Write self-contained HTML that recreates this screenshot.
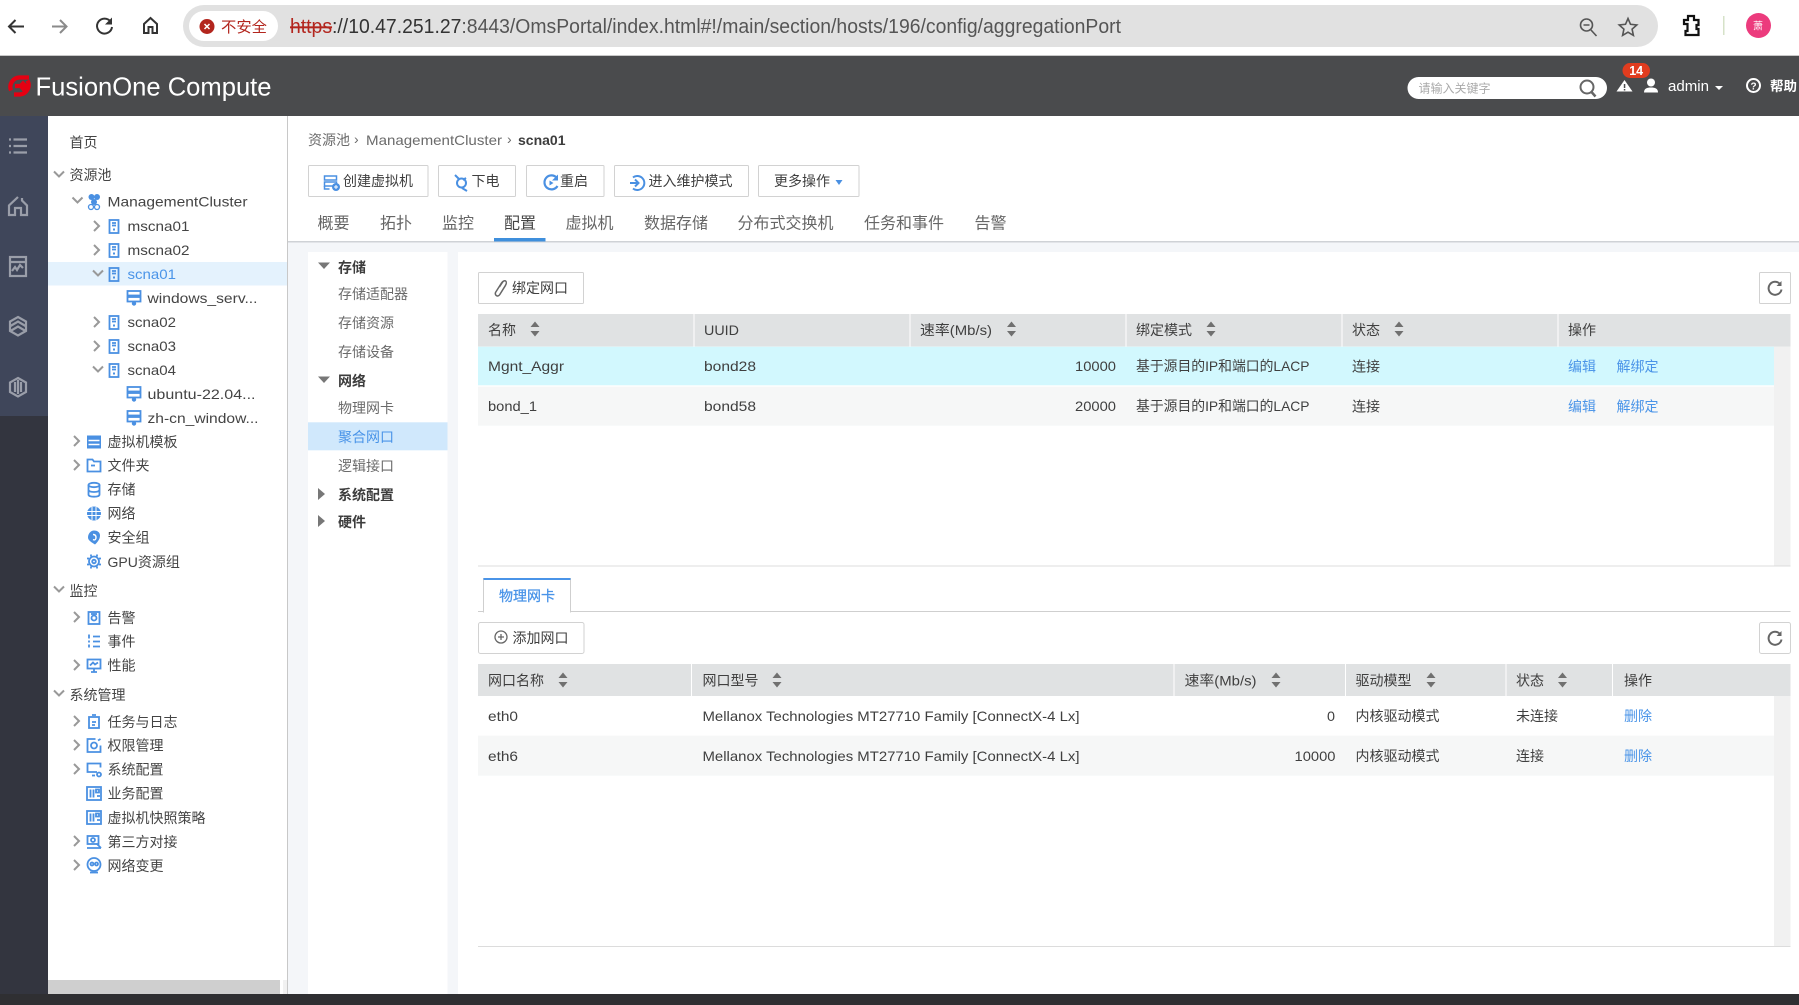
<!DOCTYPE html>
<html lang="zh-CN">
<head>
<meta charset="utf-8">
<title>FusionOne Compute</title>
<style>
html,body{margin:0;padding:0;width:1799px;height:1005px;overflow:hidden;background:#fff}
svg{display:block;font-family:"Liberation Sans","Noto Sans CJK SC",sans-serif}
text{white-space:pre}
.t{font-size:14px;fill:#444}
.m{font-size:14px;fill:#3f3f3f}
.g{font-size:14px;fill:#6b6b6b}
.b{font-size:14px;fill:#3d3d3d;font-weight:700}
.l{font-size:14px;fill:#4a94e8}
.tab{font-size:16px;fill:#666}
.ic{fill:none;stroke:#4a90e2;stroke-width:1.8}
.rail{fill:none;stroke:#9a9ea9;stroke-width:2.2}
.nav{fill:none;stroke:#333;stroke-width:2}
.btn{fill:#fff;stroke:#d2d2d2;stroke-width:1}
</style>
</head>
<body>
<svg xmlns="http://www.w3.org/2000/svg" width="1799" height="1005" viewBox="0 0 1799 1005">
<defs>
<path id="sort" d="M-4.500 -2L0 -7.500L4.500 -2ZM-4.500 2L0 7.500L4.500 2Z" fill="#707070"/>
<path id="cr" d="M-3 -5L2 0L-3 5" fill="none" stroke="#999" stroke-width="2"/>
<path id="cd" d="M-5 -2.500L0 2.500L5 -2.500" fill="none" stroke="#999" stroke-width="2"/>
<g id="host" class="ic"><rect x="-4.500" y="-6.500" width="9" height="13"/><path d="M-2 -3.500h4M-2 -1h4"/><path d="M-1 3h2" stroke-width="2"/></g>
<g id="vm" class="ic"><rect x="-6.500" y="-6.500" width="13" height="4.500"/><rect x="-6.500" y="-.5" width="13" height="4.500"/><path d="M0 4v2.500"/><circle cx="0" cy="6" r="1.300"/></g>
<g id="tmp"><rect x="-7" y="-6.500" width="14" height="13" fill="#4a90e2"/><path d="M-5.500 -1.500h11M-5.500 2.500h11" stroke="#fff" stroke-width="1.400"/></g>
<g id="folder" class="ic"><path d="M-6.500 -6h5l1.500 2h6.500v10h-13z"/><path d="M-3 0h4"/></g>
<g id="db" class="ic" stroke-width="2"><ellipse cx="0" cy="-4.500" rx="5.500" ry="2.200"/><path d="M-5.500 -4.500v9.500c0 1.500 2.500 2.200 5.500 2.200s5.500 -.7 5.500 -2.200v-9.500M-5.500 .3c0 1.500 2.500 2.200 5.500 2.200s5.500 -.7 5.500 -2.200"/></g>
<g id="net"><circle r="7" fill="#4a90e2"/><path d="M-7 -2h14M-7 2h14M-2 -6.500v13M2 -6.500v13" stroke="#fff" stroke-width="1"/></g>
<g id="sec"><path d="M0 -7c3 0 6 1.500 6 5 0 4 -3 7 -5 9 -3 -2 -7 -4 -7 -7 0 -4 3 -7 6 -7z" fill="#4a90e2"/><path d="M-1 -3c2 0 3 1 3 3s-1 3 -3 2" fill="none" stroke="#fff" stroke-width="1.400"/></g>
<g id="gpu" class="ic" stroke-width="1.800"><circle r="5"/><circle r="1.800"/><path d="M-7 -3h2M-7 3h2M5 -3h2M5 3h2M-3 -7v2M3 -7v2M-3 5v2M3 5v2"/></g>
<g id="alarm" class="ic"><rect x="-5.500" y="-6" width="11" height="12"/><circle r="2.500"/><path d="M-3 -4h6"/></g>
<g id="evt" class="ic"><path d="M-1 -5h7M-1 0h7M-1 5h7M-5 -7v4M-5 -1v2M-5 3v3"/></g>
<g id="perf" class="ic"><rect x="-6.500" y="-6" width="13" height="9"/><path d="M-3 6.500h6M0 3v3M-4 0l3 -3 2 2 3 -2"/></g>
<g id="task" class="ic" stroke-width="1.800"><rect x="-5" y="-5" width="10" height="11"/><path d="M-2 -7h4M-2 0h4M-2 3h3"/></g>
<g id="perm" class="ic" stroke-width="1.800"><path d="M6.500 0v6.500h-13v-13h8"/><circle cx="0" cy="0" r="3"/><path d="M4 -5l2.500 -1.500"/></g>
<g id="sys" class="ic" stroke-width="1.800"><path d="M3 2.500h-9.500v-8.500h13v4"/><path d="M-2 6h3"/><circle cx="5" cy="5" r="2"/></g>
<g id="biz" class="ic"><rect x="-7" y="-6.500" width="14" height="13"/><path d="M-3.500 -4v8M-.5 -4v8M2 -4h3v3h-3zM3 2.500h3"/></g>
<g id="third" class="ic"><rect x="-6.500" y="-6" width="11" height="8"/><circle cx="-1" cy="-2" r="2"/><path d="M-7 6h14M3 2l4 4"/></g>
<g id="chg" class="ic"><circle cx="0" cy="-1.500" r="6.500"/><circle cx="-2" cy="-2" r="1.500"/><circle cx="2.500" cy="-2" r="1.500"/><path d="M-4 6.500h8"/></g>
<g id="rf"><path d="M5 -4.500A6.500 6.500 0 1 0 6.500 1" fill="none" stroke="#666" stroke-width="2"/><path d="M6.500 -7.500v5h-5z" fill="#666"/></g>
</defs>

<!-- browser chrome -->
<rect width="1799" height="55" fill="#fff"/>
<rect x="0" y="55" width="1799" height="1" fill="#c8c8c8"/>
<rect x="183" y="5" width="1475" height="42" rx="21" fill="#e1e1e1"/>
<rect x="189" y="11" width="89" height="30" rx="15" fill="#fff"/>
<path class="nav" d="M24 26.500H9M15.500 20L9 26.500L15.500 33"/>
<path d="M67 26.500H52M60 20L66.500 26.500L60 33" fill="none" stroke="#8a8a8a" stroke-width="2"/>
<path class="nav" d="M110.500 21.500A7.500 7.500 0 1 0 112 27"/><path d="M112 17.500v7h-7z" fill="#333"/>
<path d="M144 33v-9l6.500 -6 6.500 6v9h-4.500v-6h-4v6z" fill="none" stroke="#333" stroke-width="2"/>
<circle cx="207" cy="26.500" r="7.500" fill="#b3261e"/><path d="M204.500 24l5 5M209.500 24l-5 5" stroke="#fff" stroke-width="1.500"/>
<text x="221" y="32" font-size="15" fill="#b3261e" textLength="46" lengthAdjust="spacingAndGlyphs">不安全</text>
<text x="290" y="33" font-size="20" fill="#555" textLength="831" lengthAdjust="spacingAndGlyphs"><tspan fill="#b3261e" text-decoration="line-through">https</tspan><tspan fill="#333">://10.47.251.27</tspan>:8443/OmsPortal/index.html#!/main/section/hosts/196/config/aggregationPort</text>
<circle cx="1586.500" cy="25" r="6" fill="none" stroke="#555" stroke-width="1.600"/><path d="M1591 30l5.500 6M1583.500 25h6" stroke="#555" stroke-width="1.600" fill="none"/>
<path d="M1628 18.500l2.500 5.800 6.300 .7 -4.700 4.200 1.300 6.200 -5.400 -3.200 -5.400 3.200 1.300 -6.200 -4.700 -4.200 6.300 -.7z" fill="none" stroke="#555" stroke-width="1.600"/>
<path d="M1684 20h4v-4h6v4h4.500v5h-2v4h2v6h-13v-4h2v-7h-3.500z" fill="none" stroke="#111" stroke-width="2.200"/>
<rect x="1723" y="16" width="1.500" height="19" fill="#d6e2c8"/>
<circle cx="1758.500" cy="25.500" r="12.500" fill="#ec3b7d"/>
<text x="1753" y="29.500" font-size="10" fill="#fff">萧</text>

<!-- app header -->
<rect y="56" width="1799" height="60" fill="#4a4b4d"/>
<path d="M11 90.500A9.500 9.500 0 0 1 19 77.500H29M27.500 80.500A9.500 9.500 0 0 1 20 94.500H14M15 86H25M21.500 82L25.500 86L21.500 90" fill="none" stroke="#e60012" stroke-width="4.200"/>
<text x="35.500" y="95.500" font-size="26" fill="#fff" textLength="236" lengthAdjust="spacingAndGlyphs">FusionOne Compute</text>
<rect x="1407.500" y="77" width="199.500" height="22" rx="11" fill="#fff"/>
<text x="1418.500" y="92.500" font-size="12" fill="#aaa">请输入关键字</text>
<circle cx="1587" cy="87" r="6.500" fill="none" stroke="#666" stroke-width="2"/><path d="M1591.500 92l4 4.500" stroke="#666" stroke-width="2.500"/>
<path d="M1624.500 80L1632.500 91.500H1616.500Z" fill="#fff"/><rect x="1623.800" y="84" width="1.500" height="4" fill="#4a4b4d"/><rect x="1623.800" y="89" width="1.500" height="1.500" fill="#4a4b4d"/>
<rect x="1622.500" y="63" width="27.500" height="15" rx="7.500" fill="#e03c1f"/>
<text x="1636.200" y="75" font-size="12.500" font-weight="700" fill="#fff" text-anchor="middle">14</text>
<circle cx="1651" cy="82.500" r="4" fill="#fff"/><path d="M1644 92.500c0 -4 3 -5 7 -5s7 1 7 5z" fill="#fff"/>
<text x="1668" y="91" font-size="14.500" fill="#fff" textLength="41" lengthAdjust="spacingAndGlyphs">admin</text>
<path d="M1715 86h8l-4 4z" fill="#fff"/>
<circle cx="1753.500" cy="85.500" r="6.500" fill="none" stroke="#fff" stroke-width="2"/><text x="1753.500" y="89.500" font-size="10" font-weight="700" fill="#fff" text-anchor="middle">?</text>
<text x="1770" y="91" font-size="13.500" font-weight="700" fill="#fff">帮助</text>

<!-- left rail -->
<rect y="116" width="48" height="889" fill="#33353f"/>
<rect y="116" width="48" height="300" fill="#3f465a"/>
<path class="rail" d="M13.500 139.500H27M13.500 146H27M13.500 152.500H27M9 139.500H11M9 146H11M9 152.500H11"/>
<path class="rail" d="M18 197L9 205.500V215H15V208H21V215H27V205.500L22 200.500V198"/>
<rect class="rail" x="10" y="257" width="16" height="19"/><path class="rail" d="M10 262H26M12 271l3 -4 2 3 3 -5 3 3" stroke-width="1.500"/>
<path class="rail" d="M18 317L26 321.500V331L18 335.500L10 331V321.500ZM10.500 326l7.500 -4.500 7.500 4.500M10.500 331l7.500 -4.500 7.500 4.500" stroke-width="2"/>
<path class="rail" d="M18 378L26 382.500V392L18 396.500L10 392V382.500ZM15 382v10M18 380v14M21 382v10" stroke-width="2"/>

<!-- tree panel -->
<rect x="48" y="116" width="239" height="878" fill="#fff"/>
<rect x="287" y="116" width="1" height="878" fill="#c8c8c8"/>
<rect x="48" y="262" width="239" height="23.500" fill="#e4f2fd"/>
<rect x="48" y="980" width="232" height="14" fill="#cfcfcf"/>
<rect x="283" y="980" width="4" height="14" fill="#f1f1f1"/>

<text class="t" x="69.500" y="147.500">首页</text>
<use href="#cd" x="59" y="174"/><text class="t" x="69.500" y="180">资源池</text>
<use href="#cd" x="77.500" y="200"/>
<g fill="#4a90e2"><circle cx="91.500" cy="197" r="3"/><circle cx="97" cy="197" r="3"/><circle cx="94" cy="202" r="3"/></g><circle cx="91" cy="207" r="2.500" fill="none" stroke="#4a90e2" stroke-width="1.300"/><circle cx="97" cy="207" r="2.500" fill="none" stroke="#4a90e2" stroke-width="1.300"/>
<text class="t" x="107.500" y="206.500" textLength="140" lengthAdjust="spacingAndGlyphs">ManagementCluster</text>
<use href="#cr" x="97" y="226"/><use href="#host" x="114" y="226.500"/><text class="t" x="127.500" y="231" textLength="62" lengthAdjust="spacingAndGlyphs">mscna01</text>
<use href="#cr" x="97" y="250"/><use href="#host" x="114" y="250.500"/><text class="t" x="127.500" y="255" textLength="62" lengthAdjust="spacingAndGlyphs">mscna02</text>
<use href="#cd" x="98" y="273"/><use href="#host" x="114" y="274.500"/><text class="l" x="127.500" y="279" textLength="48.500" lengthAdjust="spacingAndGlyphs">scna01</text>
<use href="#vm" x="134" y="297.500"/><text class="t" x="147.500" y="303" textLength="110" lengthAdjust="spacingAndGlyphs">windows_serv...</text>
<use href="#cr" x="97" y="322"/><use href="#host" x="114" y="322.500"/><text class="t" x="127.500" y="327" textLength="48.500" lengthAdjust="spacingAndGlyphs">scna02</text>
<use href="#cr" x="97" y="346"/><use href="#host" x="114" y="346.500"/><text class="t" x="127.500" y="351" textLength="48.500" lengthAdjust="spacingAndGlyphs">scna03</text>
<use href="#cd" x="98" y="369"/><use href="#host" x="114" y="370.500"/><text class="t" x="127.500" y="375" textLength="48.500" lengthAdjust="spacingAndGlyphs">scna04</text>
<use href="#vm" x="134" y="393.500"/><text class="t" x="147.500" y="399" textLength="108" lengthAdjust="spacingAndGlyphs">ubuntu-22.04...</text>
<use href="#vm" x="134" y="417.500"/><text class="t" x="147.500" y="423" textLength="111" lengthAdjust="spacingAndGlyphs">zh-cn_window...</text>
<use href="#cr" x="77" y="441"/><use href="#tmp" x="94" y="442"/><text class="t" x="107.500" y="447">虚拟机模板</text>
<use href="#cr" x="77" y="465"/><use href="#folder" x="94" y="465.500"/><text class="t" x="107.500" y="470.500">文件夹</text>
<use href="#db" x="94" y="489.500"/><text class="t" x="107.500" y="494.500">存储</text>
<use href="#net" x="94" y="513.500"/><text class="t" x="107.500" y="518.500">网络</text>
<use href="#sec" x="94" y="537.500"/><text class="t" x="107.500" y="542.500">安全组</text>
<use href="#gpu" x="94" y="561.500"/><text class="t" x="107.500" y="567" >GPU资源组</text>
<use href="#cd" x="59" y="589"/><text class="t" x="69.500" y="596">监控</text>
<use href="#cr" x="77" y="617"/><use href="#alarm" x="94" y="618"/><text class="t" x="107.500" y="623">告警</text>
<use href="#evt" x="94" y="641.500"/><text class="t" x="107.500" y="646.500">事件</text>
<use href="#cr" x="77" y="665"/><use href="#perf" x="94" y="665.500"/><text class="t" x="107.500" y="670.500">性能</text>
<use href="#cd" x="59" y="693"/><text class="t" x="69.500" y="700">系统管理</text>
<use href="#cr" x="77" y="721"/><use href="#task" x="94" y="722"/><text class="t" x="107.500" y="727">任务与日志</text>
<use href="#cr" x="77" y="745"/><use href="#perm" x="94" y="745.500"/><text class="t" x="107.500" y="750.500">权限管理</text>
<use href="#cr" x="77" y="769"/><use href="#sys" x="94" y="769.500"/><text class="t" x="107.500" y="774.500">系统配置</text>
<use href="#biz" x="94" y="793.500"/><text class="t" x="107.500" y="798.500">业务配置</text>
<use href="#biz" x="94" y="817.500"/><text class="t" x="107.500" y="823">虚拟机快照策略</text>
<use href="#cr" x="77" y="841"/><use href="#third" x="94" y="842"/><text class="t" x="107.500" y="847">第三方对接</text>
<use href="#cr" x="77" y="865"/><use href="#chg" x="94" y="866"/><text class="t" x="107.500" y="871">网络变更</text>

<!-- main top -->
<text class="g" x="308" y="145">资源池</text>
<text class="g" x="354" y="144">›</text>
<text class="g" x="366" y="145" textLength="136" lengthAdjust="spacingAndGlyphs">ManagementCluster</text>
<text class="g" x="507" y="144">›</text>
<text class="b" x="518" y="145" textLength="47.500" lengthAdjust="spacingAndGlyphs">scna01</text>

<rect class="btn" x="308.500" y="165.500" width="119.500" height="31" rx="1"/>
<rect class="btn" x="438.500" y="165.500" width="77" height="31" rx="1"/>
<rect class="btn" x="526.500" y="165.500" width="77.500" height="31" rx="1"/>
<rect class="btn" x="614.500" y="165.500" width="134" height="31" rx="1"/>
<rect class="btn" x="758.500" y="165.500" width="100.500" height="31" rx="1"/>
<g fill="none" stroke="#4a90e2" stroke-width="1.500"><rect x="324.500" y="176" width="12" height="4"/><rect x="324.500" y="182" width="12" height="4"/><path d="M324.500 186v3h5"/></g><circle cx="336" cy="187" r="4" fill="#4a90e2"/><path d="M334 187h4M336 185v4" stroke="#fff"/>
<text class="m" x="343" y="186">创建虚拟机</text>
<circle cx="461.500" cy="183" r="4.500" fill="none" stroke="#4a90e2" stroke-width="2"/><path d="M455 175l4 4M462 188l5 3M466 178l-3 2" stroke="#4a90e2" stroke-width="2"/>
<text class="m" x="471.500" y="186">下电</text>
<path d="M556.500 177.500A7 7 0 1 0 557.500 186" fill="none" stroke="#4a90e2" stroke-width="2.200"/><path d="M558 174.500v6h-6z" fill="#4a90e2"/><path d="M549.500 180.500l4 2.500 -4 2.500z" fill="#4a90e2"/>
<text class="m" x="560" y="186">重启</text>
<path d="M633 177.500a7 7 0 1 1 0 11" fill="none" stroke="#4a90e2" stroke-width="2"/><path d="M630 183h8M635 179.500l3.500 3.500 -3.500 3.500" fill="none" stroke="#4a90e2" stroke-width="2"/>
<text class="m" x="648.500" y="186">进入维护模式</text>
<text class="m" x="774" y="186">更多操作</text>
<path d="M835.500 180h7l-3.500 5z" fill="#4a90e2"/>

<g class="tab">
<text class="tab" x="317.500" y="228.500">概要</text>
<text class="tab" x="380" y="228.500">拓扑</text>
<text class="tab" x="442" y="228.500">监控</text>
<text class="tab" x="504" y="228.500" style="fill:#444">配置</text>
<text class="tab" x="565.500" y="228.500">虚拟机</text>
<text class="tab" x="644" y="228.500">数据存储</text>
<text class="tab" x="737.500" y="228.500">分布式交换机</text>
<text class="tab" x="864" y="228.500">任务和事件</text>
<text class="tab" x="974.500" y="228.500">告警</text>
</g>
<rect x="288" y="241.500" width="1511" height="752.500" fill="#f4f6f9"/>
<rect x="288" y="241" width="1511" height="1.500" fill="#cfd2d6"/>
<rect x="494" y="238" width="51.500" height="3.500" fill="#3f8fdc"/>

<!-- subnav -->
<rect x="308" y="252" width="139.500" height="742" fill="#fff"/>
<rect x="308" y="422.300" width="139.500" height="28" fill="#d0e8fc"/>
<path d="M318 262.500H330L324 269Z" fill="#777"/>
<text class="b" x="338" y="272.500">存储</text>
<text class="g" x="338" y="299">存储适配器</text>
<text class="g" x="338" y="328">存储资源</text>
<text class="g" x="338" y="357">存储设备</text>
<path d="M318 376.500H330L324 383Z" fill="#777"/>
<text class="b" x="338" y="386">网络</text>
<text class="g" x="338" y="413">物理网卡</text>
<text class="l" x="338" y="442">聚合网口</text>
<text class="g" x="338" y="471">逻辑接口</text>
<path d="M318 488V500L325 494Z" fill="#777"/>
<text class="b" x="338" y="500">系统配置</text>
<path d="M318 515V527L325 521Z" fill="#777"/>
<text class="b" x="338" y="527">硬件</text>

<!-- right panel -->
<rect x="458" y="252" width="1341" height="742" fill="#fff"/>
<rect class="btn" x="478.500" y="272.500" width="105" height="31" rx="1"/>
<path d="M495.500 292.500l6 -9.500c1.200 -1.800 3.200 -2.700 4.200 -1.900s.7 2.800 -.4 4.600l-5.500 8.800c-1 1.500 -2.500 1.800 -3.300 1.200s-1.500 -1.700 -1 -3.200z" fill="none" stroke="#666" stroke-width="1.500"/><path d="M499.500 287l4 -6" stroke="#666" stroke-width="1.200"/>
<text class="m" x="512" y="293">绑定网口</text>
<rect class="btn" x="1759.500" y="272.500" width="31" height="31" rx="1"/>
<use href="#rf" x="1775" y="288.500"/>

<!-- table 1 -->
<rect x="478" y="314" width="1312.500" height="32.500" fill="#e0e2e3"/>
<g fill="#fff"><rect x="693.500" y="314" width="1" height="32.500"/><rect x="909.500" y="314" width="1" height="32.500"/><rect x="1125.500" y="314" width="1" height="32.500"/><rect x="1341.500" y="314" width="1" height="32.500"/><rect x="1557.500" y="314" width="1" height="32.500"/></g>
<text class="m" x="488" y="335">名称</text><use href="#sort" x="535" y="329"/>
<text class="m" x="704" y="335" textLength="35" lengthAdjust="spacingAndGlyphs">UUID</text>
<text class="m" x="920" y="335" textLength="72" lengthAdjust="spacingAndGlyphs">速率(Mb/s)</text><use href="#sort" x="1011.500" y="329"/>
<text class="m" x="1136" y="335">绑定模式</text><use href="#sort" x="1211" y="329"/>
<text class="m" x="1352" y="335">状态</text><use href="#sort" x="1399" y="329"/>
<text class="m" x="1568" y="335">操作</text>
<rect x="1774" y="346.500" width="16.500" height="219" fill="#f1f1f1"/>
<rect x="478" y="346.700" width="1296" height="38.600" fill="#d2f8fe"/>
<rect x="478" y="386.700" width="1296" height="39" fill="#f6f7f7"/>
<text class="m" x="488" y="371" textLength="76" lengthAdjust="spacingAndGlyphs">Mgnt_Aggr</text>
<text class="m" x="704" y="371" textLength="52" lengthAdjust="spacingAndGlyphs">bond28</text>
<text class="m" x="1075" y="371" textLength="41" lengthAdjust="spacingAndGlyphs">10000</text>
<text class="m" x="1136" y="371" textLength="173.500" lengthAdjust="spacingAndGlyphs">基于源目的IP和端口的LACP</text>
<text class="m" x="1352" y="371.500">连接</text>
<text class="l" x="1568" y="371.500">编辑</text><text class="l" x="1616.500" y="371.500">解绑定</text>
<text class="m" x="488" y="411" textLength="49" lengthAdjust="spacingAndGlyphs">bond_1</text>
<text class="m" x="704" y="411" textLength="52" lengthAdjust="spacingAndGlyphs">bond58</text>
<text class="m" x="1075" y="411" textLength="41" lengthAdjust="spacingAndGlyphs">20000</text>
<text class="m" x="1136" y="411" textLength="173.500" lengthAdjust="spacingAndGlyphs">基于源目的IP和端口的LACP</text>
<text class="m" x="1352" y="411.500">连接</text>
<text class="l" x="1568" y="411.500">编辑</text><text class="l" x="1616.500" y="411.500">解绑定</text>
<rect x="478" y="565.500" width="1312.500" height="1" fill="#dcdcdc"/>

<!-- lower tab -->
<rect x="478" y="611" width="1312.500" height="1" fill="#cfcfcf"/>
<rect x="483.500" y="578.500" width="87" height="33.500" fill="#fff" stroke="#cfcfcf"/>
<rect x="484" y="611" width="86" height="1.500" fill="#fff"/>
<rect x="483.500" y="578" width="87" height="2" fill="#4a94e8"/>
<text class="l" x="499" y="601" stroke="#4a94e8" stroke-width=".3">物理网卡</text>
<rect class="btn" x="478.500" y="622.500" width="105.500" height="31" rx="2"/>
<circle cx="501" cy="637" r="6" fill="none" stroke="#666" stroke-width="1.300"/><path d="M498 637h6M501 634v6" stroke="#666" stroke-width="1.300"/>
<text class="m" x="512.500" y="643">添加网口</text>
<rect class="btn" x="1759.500" y="622.500" width="31" height="31" rx="2"/>
<use href="#rf" x="1775" y="638.500"/>

<!-- table 2 -->
<rect x="478" y="664" width="1312.500" height="32" fill="#e0e2e3"/>
<g fill="#fff"><rect x="691" y="664" width="1" height="32"/><rect x="1173.500" y="664" width="1" height="32"/><rect x="1345" y="664" width="1" height="32"/><rect x="1505.500" y="664" width="1" height="32"/><rect x="1612" y="664" width="1" height="32"/></g>
<text class="m" x="488" y="685.500">网口名称</text><use href="#sort" x="563" y="680"/>
<text class="m" x="702.500" y="685.500">网口型号</text><use href="#sort" x="777" y="680"/>
<text class="m" x="1184.500" y="685.500" textLength="72" lengthAdjust="spacingAndGlyphs">速率(Mb/s)</text><use href="#sort" x="1276" y="680"/>
<text class="m" x="1355.500" y="685.500">驱动模型</text><use href="#sort" x="1431" y="680"/>
<text class="m" x="1516" y="685.500">状态</text><use href="#sort" x="1562.500" y="680"/>
<text class="m" x="1624" y="685.500">操作</text>
<rect x="1774" y="696" width="16.500" height="250" fill="#f1f1f1"/>
<rect x="478" y="735.700" width="1296" height="40" fill="#f6f7f7"/>
<text class="m" x="488" y="721" textLength="30" lengthAdjust="spacingAndGlyphs">eth0</text>
<text class="m" x="702.500" y="721" textLength="377" lengthAdjust="spacingAndGlyphs">Mellanox Technologies MT27710 Family [ConnectX-4 Lx]</text>
<text class="m" x="1327" y="721" textLength="8" lengthAdjust="spacingAndGlyphs">0</text>
<text class="m" x="1355.500" y="721">内核驱动模式</text>
<text class="m" x="1516" y="721">未连接</text>
<text class="l" x="1624" y="721">删除</text>
<text class="m" x="488" y="761" textLength="30" lengthAdjust="spacingAndGlyphs">eth6</text>
<text class="m" x="702.500" y="761" textLength="377" lengthAdjust="spacingAndGlyphs">Mellanox Technologies MT27710 Family [ConnectX-4 Lx]</text>
<text class="m" x="1294.500" y="761" textLength="41" lengthAdjust="spacingAndGlyphs">10000</text>
<text class="m" x="1355.500" y="761">内核驱动模式</text>
<text class="m" x="1516" y="761">连接</text>
<text class="l" x="1624" y="761">删除</text>
<rect x="478" y="946" width="1312.500" height="1" fill="#dcdcdc"/>

<!-- bottom strip -->
<rect y="994" width="1799" height="11" fill="#2f2f32"/>
</svg>
</body>
</html>
